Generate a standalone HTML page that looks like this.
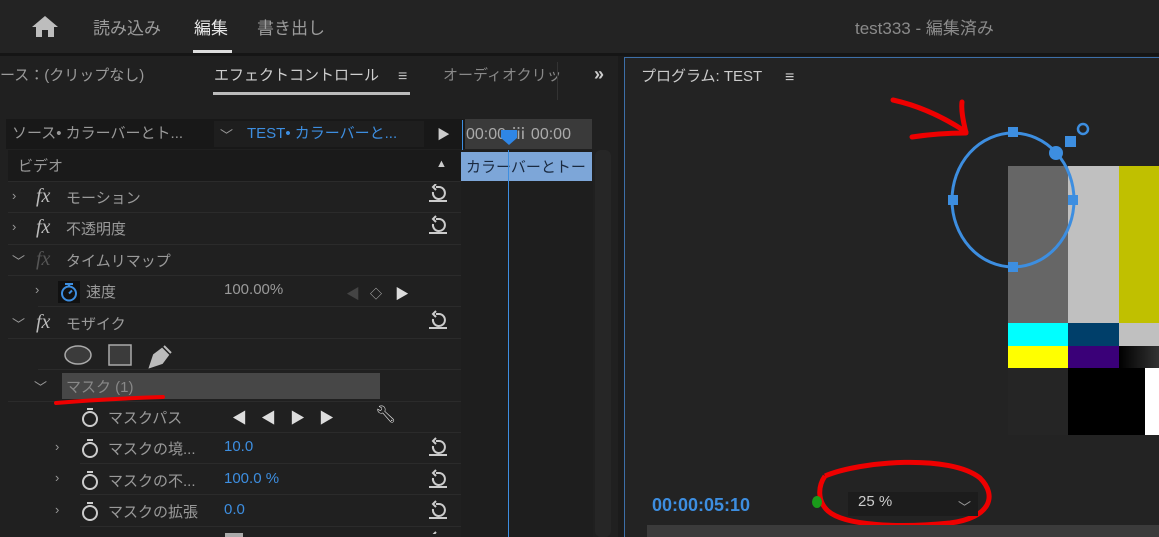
<!DOCTYPE html>
<html><head><meta charset="utf-8"><style>
*{margin:0;padding:0;box-sizing:border-box}
body{width:1159px;height:537px;overflow:hidden;background:#1b1b1b;font-family:"Liberation Sans","Noto Sans CJK JP",sans-serif;color:#aaa;position:relative}
.a{position:absolute;white-space:nowrap}
.row{position:absolute;left:8px;width:453px;height:31px;border-bottom:1px solid #2b2b2b}
.t{font-size:15px;color:#9a9a9a;margin-top:-2px}
.fx{font-family:"Liberation Serif",serif;font-style:italic;font-size:20px;color:#bbb}
.chev{font-size:13px;color:#999}
.blue{color:#3d8ee0}
</style></head><body>
<div class="a" style="left:0;top:0;width:1159px;height:53px;background:#232323"></div>
<div class="a" style="left:0;top:53px;width:1159px;height:3px;background:#151515"></div>
<svg class="a" style="left:31px;top:14px" width="28" height="24" viewBox="0 0 28 24"><path d="M14 2 L27 13 L23 13 L23 23 L17 23 L17 16 L11 16 L11 23 L5 23 L5 13 L1 13 Z" fill="#bdbdbd"/></svg>
<div class="a" style="left:93px;top:14px;font-size:17px;color:#9c9c9c">読み込み</div>
<div class="a" style="left:194px;top:14px;font-size:17px;color:#e6e6e6">編集</div>
<div class="a" style="left:193px;top:50px;width:39px;height:3px;background:#ddd"></div>
<div class="a" style="left:257px;top:14px;font-size:17px;color:#9c9c9c">書き出し</div>
<div class="a" style="left:855px;top:14px;font-size:17px;color:#8a8a8a">test333 - 編集済み</div>

<div class="a" style="left:0;top:56px;width:618px;height:481px;background:#202020"></div>
<div class="a t" style="left:0;top:66px;color:#9a9a9a">ース：(クリップなし)</div>
<div class="a t" style="left:214px;top:66px;color:#cfcfcf">エフェクトコントロール</div>
<div class="a" style="left:398px;top:68px;font-size:16px;color:#bbb">≡</div>
<div class="a" style="left:213px;top:92px;width:197px;height:3px;background:#bbb"></div>
<div class="a t" style="left:443px;top:66px;color:#888">オーディオクリッ</div>
<div class="a" style="left:557px;top:62px;width:1px;height:38px;background:#333"></div>
<div class="a" style="left:594px;top:64px;font-size:18px;color:#ccc;font-weight:bold">»</div>

<div class="a" style="left:6px;top:119px;width:586px;height:30px;background:#181818"></div>
<div class="a" style="left:214px;top:121px;width:210px;height:26px;background:#1e1e1e"></div>
<div class="a t" style="left:12px;top:124px;color:#999">ソース• カラーバーとト...</div>
<div class="a chev" style="left:220px;top:125px">﹀</div>
<div class="a t blue" style="left:247px;top:124px">TEST• カラーバーと...</div>
<div class="a" style="left:437px;top:124px;font-size:13px;color:#ccc">▶</div>
<div class="a" style="left:465px;top:119px;width:127px;height:30px;background:#3a3a3a"></div>
<div class="a" style="left:462px;top:120px;width:1px;height:30px;background:#3d8ee0"></div>
<div class="a t" style="left:466px;top:122px;color:#aaa;font-size:16px">00:00 ⅲ 00:00</div>
<svg class="a" style="left:499px;top:128px" width="20" height="20"><path d="M2 2 H18 V10 L10 17 L2 10Z" fill="#2f86e6"/></svg>

<div class="a" style="left:461px;top:150px;width:132px;height:387px;background:#1e1e1e"></div>
<div class="a" style="left:595px;top:150px;width:16px;height:387px;background:#262626;border-radius:6px"></div>
<div class="a" style="left:461px;top:152px;width:131px;height:29px;background:#7da6d8"></div>
<div class="a" style="left:466px;top:156px;font-size:15px;color:#1a2a40">カラーバーとトー</div>
<div class="a" style="left:508px;top:150px;width:1px;height:387px;background:#3d8ee0"></div>

<div class="row" style="top:150px;height:32px;background:#1a1a1a"></div>
<div class="a t" style="left:18px;top:157px;color:#999">ビデオ</div>
<div class="a" style="left:436px;top:158px;font-size:11px;color:#ccc">▲</div>

<div class="row" style="top:182px"></div>
<div class="a chev" style="left:12px;top:188px">›</div><div class="a fx" style="left:36px;top:185px">fx</div><div class="a t" style="left:66px;top:189px">モーション</div>
<div class="row" style="top:214px"></div>
<div class="a chev" style="left:12px;top:219px">›</div><div class="a fx" style="left:36px;top:216px">fx</div><div class="a t" style="left:66px;top:220px">不透明度</div>
<div class="row" style="top:245px"></div>
<div class="a chev" style="left:12px;top:251px">﹀</div><div class="a fx" style="left:36px;top:248px;color:#555">fx</div><div class="a t" style="left:66px;top:252px">タイムリマップ</div>
<div class="row" style="top:276px;left:38px;width:423px"></div>
<div class="a chev" style="left:35px;top:282px">›</div>
<svg class="a" style="left:58px;top:281px" width="22" height="22"><rect x="0" y="0" width="22" height="22" fill="#111"/><circle cx="11" cy="12.5" r="7" fill="none" stroke="#3d8ee0" stroke-width="2"/><path d="M7 3h8M11 3v2M11 12.5l3-3" stroke="#3d8ee0" stroke-width="2"/></svg>
<div class="a t" style="left:86px;top:283px">速度</div>
<div class="a t" style="left:224px;top:283px">100.00%</div>
<div class="a" style="left:346px;top:284px;font-size:14px;color:#444">◀</div>
<div class="a" style="left:370px;top:285px;font-size:12px;color:#bbb">◇</div>
<div class="a" style="left:395px;top:284px;font-size:14px;color:#ddd">▶</div>
<div class="row" style="top:308px"></div>
<div class="a chev" style="left:12px;top:314px">﹀</div><div class="a fx" style="left:36px;top:311px">fx</div><div class="a t" style="left:66px;top:315px">モザイク</div>
<div class="row" style="top:339px;left:38px;width:423px"></div>
<svg class="a" style="left:64px;top:343px" width="110" height="26"><ellipse cx="14" cy="12" rx="13" ry="9" fill="#3b3b3b" stroke="#aaa" stroke-width="1.5"/><rect x="45" y="2" width="22" height="20" fill="#3b3b3b" stroke="#aaa" stroke-width="1.5"/><path d="M86 24 L90 12 L98 6 L104 12 L98 20 Z M100 3 L107 10" fill="#bbb" stroke="#bbb" stroke-width="2"/></svg>
<div class="row" style="top:371px"></div>
<div class="a chev" style="left:34px;top:377px">﹀</div>
<div class="a" style="left:62px;top:373px;width:318px;height:26px;background:#474747"></div>
<div class="a t" style="left:66px;top:378px;color:#888">マスク (1)</div>
<div class="row" style="top:402px;left:80px;width:381px"></div>
<div class="row" style="top:433px;left:80px;width:381px"></div>
<div class="row" style="top:464px;left:80px;width:381px"></div>
<div class="row" style="top:496px;left:80px;width:381px"></div>
<svg class="a" style="left:80px;top:405px" width="22" height="130"><g fill="none" stroke="#ccc" stroke-width="2"><circle cx="10" cy="14" r="7"/><circle cx="10" cy="45" r="7"/><circle cx="10" cy="77" r="7"/><circle cx="10" cy="108" r="7"/><path d="M7 4h6M7 35h6M7 67h6M7 98h6"/></g></svg>
<div class="a t" style="left:108px;top:409px">マスクパス</div>
<div class="a" style="left:232px;top:407px;font-size:15px;color:#ddd;letter-spacing:14px">◀◀▶▶</div>
<div class="a" style="left:375px;top:405px;font-size:17px;color:#ddd">🔧︎</div>
<div class="a chev" style="left:55px;top:439px">›</div><div class="a t" style="left:108px;top:440px">マスクの境...</div><div class="a t blue" style="left:224px;top:440px">10.0</div>
<div class="a chev" style="left:55px;top:470px">›</div><div class="a t" style="left:108px;top:472px">マスクの不...</div><div class="a t blue" style="left:224px;top:472px">100.0 %</div>
<div class="a chev" style="left:55px;top:502px">›</div><div class="a t" style="left:108px;top:503px">マスクの拡張</div><div class="a t blue" style="left:224px;top:503px">0.0</div>
<div class="a" style="left:225px;top:533px;width:18px;height:4px;background:#aaa"></div>
<svg class="a" style="left:428px;top:184px" width="22" height="350"><g fill="none" stroke="#ccc" stroke-width="2">
<g id="r"><path d="M5 8 a6 6 0 1 0 6 -5 h-3 M8 0 l-3 3 3 3" /><path d="M1 17h18"/></g>
<use href="#r" y="32"/><use href="#r" y="127"/><use href="#r" y="254"/><use href="#r" y="286"/><use href="#r" y="317"/><use href="#r" y="348"/></g></svg>

<div class="a" style="left:618px;top:56px;width:541px;height:481px;background:#1b1b1b"></div>
<div class="a" style="left:624px;top:57px;width:535px;height:480px;background:#232323;border-left:1px solid #3d6fa8;border-top:1px solid #3d6fa8"></div>
<div class="a t" style="left:641px;top:67px;color:#ccc">プログラム: TEST</div>
<div class="a" style="left:785px;top:69px;font-size:16px;color:#ccc">≡</div>
<div class="a" style="left:1008px;top:166px;width:60px;height:157px;background:#666"></div>
<div class="a" style="left:1068px;top:166px;width:51px;height:157px;background:#c0c0c0"></div>
<div class="a" style="left:1119px;top:166px;width:40px;height:157px;background:#c0c000"></div>
<div class="a" style="left:1008px;top:323px;width:60px;height:23px;background:#0ff"></div>
<div class="a" style="left:1068px;top:323px;width:51px;height:23px;background:#003f6a"></div>
<div class="a" style="left:1119px;top:323px;width:40px;height:23px;background:#c0c0c0"></div>
<div class="a" style="left:1008px;top:346px;width:60px;height:22px;background:#ff0"></div>
<div class="a" style="left:1068px;top:346px;width:51px;height:22px;background:#3a0078"></div>
<div class="a" style="left:1119px;top:346px;width:40px;height:22px;background:linear-gradient(90deg,#000,#333)"></div>
<div class="a" style="left:1008px;top:368px;width:60px;height:67px;background:#252525"></div>
<div class="a" style="left:1068px;top:368px;width:77px;height:67px;background:#000"></div>
<div class="a" style="left:1145px;top:368px;width:14px;height:67px;background:#fff"></div>
<svg class="a" style="left:620px;top:56px" width="539" height="481"><g stroke="#3d8ee0" fill="none" stroke-width="3">
<ellipse cx="393" cy="144" rx="61" ry="67"/></g>
<g fill="#3d8ee0"><rect x="388" y="71" width="10" height="10"/><rect x="328" y="139" width="10" height="10"/><rect x="448" y="139" width="10" height="10"/><rect x="388" y="206" width="10" height="10"/><circle cx="436" cy="97" r="7"/><rect x="445" y="80" width="11" height="11"/></g>
<circle cx="463" cy="73" r="5" fill="none" stroke="#3d8ee0" stroke-width="2.5"/>
<path d="M273 44 C300 50 325 62 346 76 M292 81 C312 78 330 77 346 77 C343 64 341 54 342 46" stroke="#e00" stroke-width="5" fill="none" stroke-linecap="round" stroke-linejoin="round"/>
<path d="M205 420 C240 405 330 398 360 422 C378 440 370 462 330 467 C280 472 225 470 208 455 C197 445 198 430 205 420" stroke="#e00" stroke-width="5" fill="none"/>
</g></svg>
<div class="a" style="left:652px;top:495px;font-size:18px;font-weight:bold;color:#3d8ee0">00:00:05:10</div>
<div class="a" style="left:812px;top:496px;width:10px;height:12px;border-radius:50%;background:#1a9a1a"></div>
<div class="a" style="left:848px;top:492px;width:130px;height:24px;background:#1c1c1c"></div>
<div class="a t" style="left:858px;top:495px;color:#ccc">25 %</div>
<div class="a chev" style="left:958px;top:497px">﹀</div>
<div class="a" style="left:647px;top:525px;width:512px;height:12px;background:#3b3b3b"></div>
<svg class="a" style="left:0;top:0" width="620" height="537"><path d="M56 403 C90 400 130 398 163 397" stroke="#e00" stroke-width="4" fill="none" stroke-linecap="round"/></svg>
</body></html>
